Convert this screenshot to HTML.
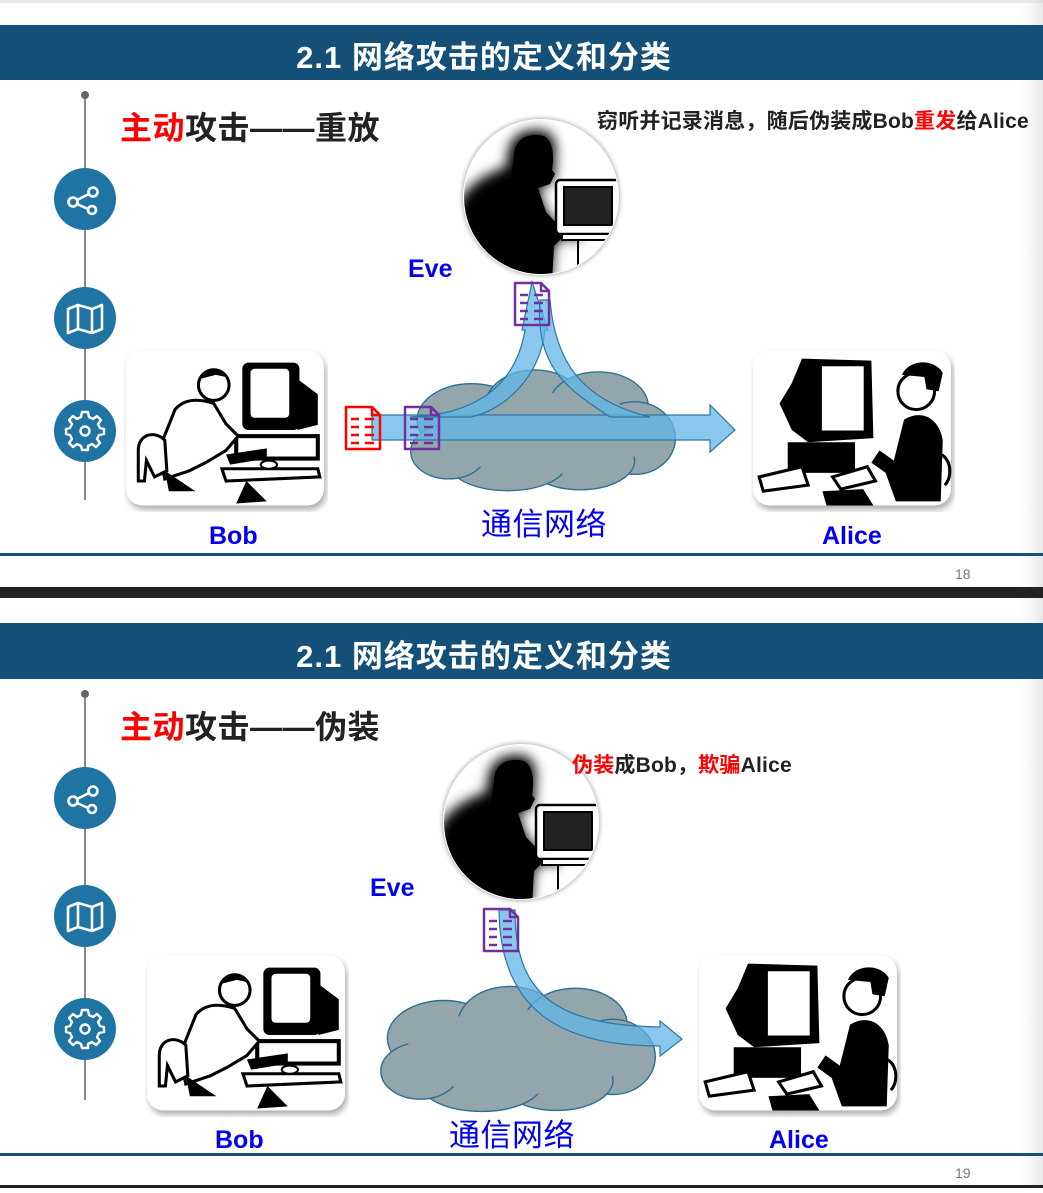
<!DOCTYPE html>
<html><head><meta charset="utf-8">
<style>
html,body{margin:0;padding:0;background:#fff;}
body{width:1043px;height:1188px;overflow:hidden;position:relative;font-family:"Liberation Sans","Noto Sans CJK SC",sans-serif;}
svg text{font-family:"Liberation Sans","Noto Sans CJK SC",sans-serif;}
</style></head><body>
<svg width="1043" height="1188" viewBox="0 0 1043 1188" xmlns="http://www.w3.org/2000/svg">
<defs>
  <radialGradient id="eveg" cx="50%" cy="50%" r="50%">
    <stop offset="0.82" stop-color="#fff"/>
    <stop offset="0.93" stop-color="#ccc"/>
    <stop offset="1" stop-color="#fff" stop-opacity="0"/>
  </radialGradient>
  <linearGradient id="rs" x1="0" x2="1">
    <stop offset="0" stop-color="#fff" stop-opacity="0"/>
    <stop offset="1" stop-color="#ccc"/>
  </linearGradient>
  <filter id="sh" x="-10%" y="-10%" width="120%" height="125%">
    <feGaussianBlur stdDeviation="3"/>
  </filter>
  <filter id="bl"><feGaussianBlur stdDeviation="6"/></filter>
  <symbol id="share" viewBox="0 0 62 62">
    <circle cx="31" cy="31" r="31" fill="#1f74a4"/>
    <g fill="none" stroke="#fff" stroke-width="2.6">
      <circle cx="19" cy="34" r="4.5"/><circle cx="39" cy="24" r="4.5"/><circle cx="38" cy="42" r="4"/>
      <path d="M23 32 L35 26 M23 36 L34 41"/>
    </g>
  </symbol>
  <symbol id="map" viewBox="0 0 62 62">
    <circle cx="31" cy="31" r="31" fill="#1f74a4"/>
    <path d="M14 22 L24 18 L38 22 L48 18 L48 42 L38 46 L24 42 L14 46 Z M24 18 L24 42 M38 22 L38 46" fill="none" stroke="#fff" stroke-width="2.6" stroke-linejoin="round"/>
  </symbol>
  <symbol id="gear" viewBox="0 0 62 62">
    <circle cx="31" cy="31" r="31" fill="#1f74a4"/>
    <path d="M28 14 L34 14 L35 19 L39 21 L43 18 L47 22 L44 26 L46 30 L50 31 L50 36 L45 37 L43 41 L46 45 L42 49 L38 46 L34 48 L34 52 L28 52 L27 48 L23 46 L19 49 L15 45 L18 41 L16 37 L12 36 L12 31 L16 30 L18 26 L15 22 L19 18 L23 21 L27 19 Z" transform="translate(0,-2)" fill="none" stroke="#fff" stroke-width="2.4" stroke-linejoin="round"/>
    <circle cx="31" cy="31" r="4.5" fill="none" stroke="#fff" stroke-width="2.4"/>
  </symbol>
  <symbol id="eve" viewBox="0 0 170 170">
    <circle cx="85" cy="85" r="84" fill="url(#eveg)"/>
    <circle cx="85" cy="85" r="78" fill="#fff"/>
    <clipPath id="ec"><circle cx="85" cy="85" r="77"/></clipPath>
    <g clip-path="url(#ec)">
      <path d="M0 100 C5 75 30 62 50 55 L52 40 C55 22 72 14 92 20 C102 28 100 42 98 55 L100 60 L94 72 L82 76 L90 100 L102 113 L128 112 L120 130 L108 124 L98 134 L95 170 L0 170 Z" fill="#000" filter="url(#bl)"/>
      <path d="M5 170 C10 115 30 80 55 66 L58 45 C58 28 70 20 88 24 C98 30 98 45 96 58 L99 62 L94 72 L82 76 L90 100 L102 113 L128 112 L122 128 L108 124 L98 134 L96 170 Z" fill="#000"/>
      <rect x="100" y="68" width="66" height="54" rx="4" fill="#fff" stroke="#000" stroke-width="2.5"/>
      <rect x="108" y="75" width="48" height="38" fill="#222" stroke="#000" stroke-width="2"/>
      <path d="M106 122 L160 122 L160 128 L106 128 Z" fill="#fff" stroke="#000" stroke-width="2"/>
      <path d="M122 128 L122 160" stroke="#000" stroke-width="2"/>
    </g>
  </symbol>
  <symbol id="bob" viewBox="0 0 200 160">
    <rect x="4" y="6" width="194" height="152" rx="16" fill="#aaa" filter="url(#sh)"/>
    <rect x="2" y="2" width="194" height="152" rx="16" fill="#fff"/>
    <rect x="116" y="14" width="56" height="66" rx="6" fill="#000"/>
    <rect x="124" y="20" width="38" height="48" rx="4" fill="#fff"/>
    <path d="M170 30 L190 45 L190 75 L170 80 Z" fill="#000"/>
    <rect x="110" y="86" width="80" height="22" fill="#fff" stroke="#000" stroke-width="4"/>
    <path d="M100 104 L140 98 L140 108 L104 114 Z" fill="#000"/>
    <path d="M96 118 L190 118 L192 126 L100 130 Z" fill="#fff" stroke="#000" stroke-width="3"/>
    <ellipse cx="142" cy="114" rx="8" ry="4" fill="#fff" stroke="#000" stroke-width="2"/>
    <path d="M120 130 L140 150 L110 152 Z" fill="#000"/>
    <circle cx="88" cy="36" r="15" fill="#fff" stroke="#000" stroke-width="3"/>
    <path d="M74 30 C78 18 96 16 100 28 L90 26 Z" fill="#000"/>
    <path d="M50 60 C60 48 76 50 88 54 L100 74 L112 86 L100 100 L80 112 L64 120 L40 128 L34 100 Z" fill="#fff" stroke="#000" stroke-width="3"/>
    <path d="M14 100 C14 84 30 80 40 90 L42 120 L30 126 L22 110 L20 130 L14 130 Z" fill="#fff" stroke="#000" stroke-width="3"/>
    <path d="M40 120 L70 140 L44 140 Z" fill="#000"/>
  </symbol>
  <symbol id="alice" viewBox="0 0 200 160">
    <rect x="4" y="6" width="194" height="152" rx="16" fill="#aaa" filter="url(#sh)"/>
    <rect x="2" y="2" width="194" height="152" rx="16" fill="#fff"/>
    <path d="M50 10 L118 12 L120 88 L56 92 L40 80 L28 54 L40 34 Z" fill="#000"/>
    <rect x="68" y="16" width="44" height="66" fill="#fff" stroke="#000" stroke-width="3"/>
    <rect x="36" y="92" width="66" height="30" fill="#000"/>
    <path d="M8 126 L50 116 L56 134 L12 140 Z" fill="#fff" stroke="#000" stroke-width="3"/>
    <path d="M80 126 L114 116 L122 130 L88 138 Z" fill="#fff" stroke="#000" stroke-width="3"/>
    <path d="M70 140 L110 138 L120 154 L74 154 Z" fill="#000"/>
    <circle cx="162" cy="42" r="18" fill="#fff" stroke="#000" stroke-width="3"/>
    <path d="M148 26 C155 10 180 10 188 24 L184 42 L172 40 L170 28 Z" fill="#000"/>
    <path d="M150 70 C165 60 184 66 188 90 L186 150 L142 150 L132 122 L118 112 L126 100 L140 110 Z" fill="#000"/>
    <path d="M186 104 C196 108 198 126 190 134" fill="none" stroke="#000" stroke-width="3"/>
  </symbol>
  <symbol id="cloud" viewBox="0 0 300 140">
    <g fill="#93a6ab" stroke="#2b6f96" stroke-width="1.5">
      <ellipse cx="70" cy="60" rx="60" ry="40"/>
      <ellipse cx="140" cy="45" rx="55" ry="40"/>
      <ellipse cx="210" cy="45" rx="55" ry="38"/>
      <ellipse cx="250" cy="80" rx="45" ry="40"/>
      <ellipse cx="190" cy="105" rx="60" ry="32"/>
      <ellipse cx="110" cy="108" rx="65" ry="30"/>
      <ellipse cx="45" cy="95" rx="42" ry="30"/>
    </g>
    <g fill="#93a6ab">
      <ellipse cx="150" cy="75" rx="120" ry="45"/>
    </g>
  </symbol>
  <symbol id="doc" viewBox="0 0 38 46">
    <path d="M2 2 L28 2 L36 10 L36 44 L2 44 Z M28 2 L28 10 L36 10" fill="none" stroke="currentColor" stroke-width="2.5" stroke-linejoin="round"/>
    <path d="M7 14 h8 M21 14 h9 M7 22 h8 M21 22 h9 M7 30 h8 M21 30 h9 M7 38 h8 M21 38 h9" stroke="currentColor" stroke-width="2.5"/>
  </symbol>
</defs>

<rect width="1043" height="1188" fill="#fff"/>
<rect x="0" y="0" width="1043" height="3" fill="#e8e8e8"/>
<rect x="1015" y="0" width="28" height="1188" fill="url(#rs)" opacity="0.5"/>

<!-- Slide 1 -->
<rect x="0" y="25" width="1043" height="55" fill="#145078"/>
<text x="484" y="68" text-anchor="middle" font-size="31" font-weight="bold" fill="#fff" letter-spacing="1">2.1 网络攻击的定义和分类</text>
<line x1="85" y1="95" x2="85" y2="500" stroke="#888" stroke-width="2"/>
<circle cx="85" cy="95" r="4" fill="#666"/>
<use href="#share" x="54" y="168" width="62" height="62"/>
<use href="#map" x="54" y="287" width="62" height="62"/>
<use href="#gear" x="54" y="400" width="62" height="62"/>
<text x="120" y="139" font-size="32" font-weight="bold" letter-spacing="0.5"><tspan fill="#f00">主动</tspan><tspan fill="#222">攻击——重放</tspan></text>
<text x="597" y="128" font-size="21" font-weight="bold" fill="#222" letter-spacing="0.2">窃听并记录消息，随后伪装成Bob<tspan fill="#f00">重发</tspan>给Alice</text>
<use href="#eve" x="456" y="112" width="170" height="170"/>
<text x="408" y="277" font-size="25" font-weight="bold" fill="#0000ee">Eve</text>
<use href="#bob" x="124" y="348" width="204" height="164"/>
<use href="#alice" x="751" y="348" width="204" height="164"/>
<use href="#cloud" x="408" y="363" width="272" height="132"/>
<g fill="#62b5e5" fill-opacity="0.75" stroke="#2b77a8" stroke-width="1.2">
  <path d="M372 415 L710 415 L710 405 L735 430 L710 452 L710 440 L372 440 Z"/>
  <path d="M410 417 C470 415 515 390 525 330 L522 330 L532 282 L548 330 L545 330 C540 380 500 412 470 417 Z"/>
  <path d="M610 417 C570 390 535 370 540 300 L550 300 C555 360 580 400 650 417 Z"/>
</g>
<use href="#doc" x="344" y="405" width="38" height="46" style="color:#f00"/>
<use href="#doc" x="403" y="405" width="38" height="46" style="color:#7030a0"/>
<use href="#doc" x="513" y="281" width="38" height="46" style="color:#7030a0"/>
<text x="209" y="544" font-size="25" font-weight="bold" fill="#0000ee">Bob</text>
<text x="822" y="544" font-size="25" font-weight="bold" fill="#0000ee">Alice</text>
<text x="481" y="535" font-size="31" fill="#0000ee" letter-spacing="0.5">通信网络</text>
<rect x="0" y="553" width="1043" height="3" fill="#145078"/>
<text x="955" y="579" font-size="14" fill="#777">18</text>

<rect x="0" y="587" width="1043" height="11" fill="#222"/>

<!-- Slide 2 -->
<rect x="0" y="623" width="1043" height="56" fill="#145078"/>
<text x="484" y="667" text-anchor="middle" font-size="31" font-weight="bold" fill="#fff" letter-spacing="1">2.1 网络攻击的定义和分类</text>
<line x1="85" y1="694" x2="85" y2="1100" stroke="#888" stroke-width="2"/>
<circle cx="85" cy="694" r="4" fill="#666"/>
<use href="#share" x="54" y="767" width="62" height="62"/>
<use href="#map" x="54" y="885" width="62" height="62"/>
<use href="#gear" x="54" y="998" width="62" height="62"/>
<text x="120" y="738" font-size="32" font-weight="bold" letter-spacing="0.5"><tspan fill="#f00">主动</tspan><tspan fill="#222">攻击——伪装</tspan></text>
<use href="#eve" x="436" y="737" width="170" height="170"/>
<text x="572" y="772" font-size="21" font-weight="bold" fill="#222" letter-spacing="0.2"><tspan fill="#f00">伪装</tspan>成Bob，<tspan fill="#f00">欺骗</tspan>Alice</text>
<text x="370" y="896" font-size="25" font-weight="bold" fill="#0000ee">Eve</text>
<use href="#bob" x="145" y="953" width="204" height="164"/>
<use href="#alice" x="697" y="953" width="204" height="164"/>
<use href="#cloud" x="378" y="980" width="282" height="135"/>
<g fill="#62b5e5" fill-opacity="0.75" stroke="#2b77a8" stroke-width="1.2">
  <path d="M499 910 L515 910 C515 990 550 1025 660 1027 L660 1021 L682 1039 L660 1056 L660 1046 C560 1046 500 1010 499 910 Z"/>
</g>
<use href="#doc" x="482" y="907" width="38" height="46" style="color:#7030a0"/>
<text x="215" y="1148" font-size="25" font-weight="bold" fill="#0000ee">Bob</text>
<text x="769" y="1148" font-size="25" font-weight="bold" fill="#0000ee">Alice</text>
<text x="449" y="1146" font-size="31" fill="#0000ee" letter-spacing="0.5">通信网络</text>
<rect x="0" y="1153" width="1043" height="3" fill="#145078"/>
<text x="955" y="1178" font-size="14" fill="#777">19</text>
<rect x="0" y="1185" width="1043" height="3" fill="#222"/>
</svg>
</body></html>
